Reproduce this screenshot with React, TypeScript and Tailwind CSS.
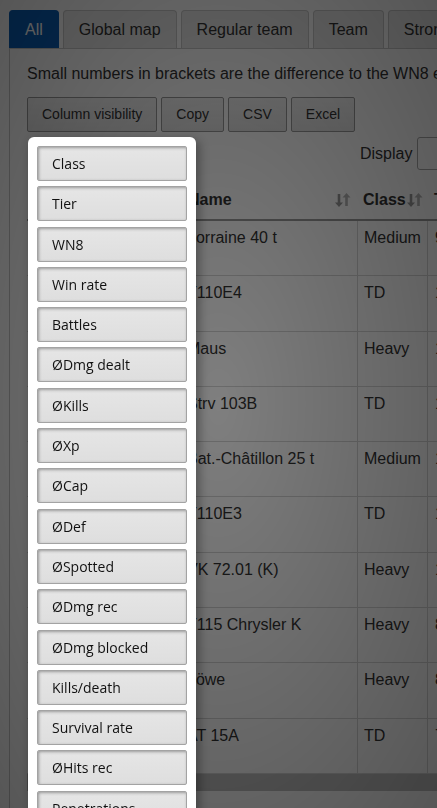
import React from 'react';

const tabs = ['All', 'Global map', 'Regular team', 'Team', 'Stronghold'];

const toolbarButtons = ['Column visibility', 'Copy', 'CSV', 'Excel'];

const rows = [
  { pos: 1, name: 'Lorraine 40 t', cls: 'Medium', tier: 9, wn8: 2210 },
  { pos: 2, name: 'T110E4', cls: 'TD', tier: 10, wn8: 2480 },
  { pos: 3, name: 'Maus', cls: 'Heavy', tier: 10, wn8: 1985 },
  { pos: 4, name: 'Strv 103B', cls: 'TD', tier: 10, wn8: 2302 },
  { pos: 5, name: 'Bat.-Châtillon 25 t', cls: 'Medium', tier: 10, wn8: 2650 },
  { pos: 6, name: 'T110E3', cls: 'TD', tier: 10, wn8: 2105 },
  { pos: 7, name: 'VK 72.01 (K)', cls: 'Heavy', tier: 10, wn8: 1890 },
  { pos: 8, name: 'T115 Chrysler K', cls: 'Heavy', tier: 8, wn8: 1720 },
  { pos: 9, name: 'Löwe', cls: 'Heavy', tier: 8, wn8: 1655 },
  { pos: 10, name: 'AT 15A', cls: 'TD', tier: 7, wn8: 1540 },
];

const visibilityItems = [
  'Class',
  'Tier',
  'WN8',
  'Win rate',
  'Battles',
  'ØDmg dealt',
  'ØKills',
  'ØXp',
  'ØCap',
  'ØDef',
  'ØSpotted',
  'ØDmg rec',
  'ØDmg blocked',
  'Kills/death',
  'Survival rate',
  'ØHits rec',
  'Penetrations',
];

const SortIcon: React.FC = () => (
  <svg width="17" height="18" viewBox="0 0 17 18" className="shrink-0">
    <path d="M5 3v10" stroke="#9a9a9a" strokeWidth="2.6" />
    <path d="M1 11.5l4 4.5 4-4.5z" fill="#9a9a9a" />
    <path d="M12.5 15V5" stroke="#b5b5b5" strokeWidth="2.6" />
    <path d="M8.5 6.5l4-4.5 4 4.5z" fill="#b5b5b5" />
  </svg>
);

const App: React.FC = () => {
  return (
    <div className="relative h-[808px] overflow-hidden bg-white font-['Liberation_Sans',Arial,sans-serif] text-[#333]">
      <div className="pl-[9px] pt-[10px] w-[900px]">
        {/* tabs */}
        <div className="flex gap-[4px]">
          {tabs.map((t, i) => (
            <div
              key={t}
              className={`h-[38px] px-[15px] flex items-center text-[16px] rounded-t-[4px] border border-b-0 whitespace-nowrap ${
                i === 0 ? 'bg-[#0b5fb8] border-[#0b5fb8] text-white' : 'bg-[#e8e8e8] border-[#c8c8c8] text-[#333]'
              }`}
            >
              {t}
            </div>
          ))}
        </div>

        {/* tab panel */}
        <div className="border border-[#c8c8c8] bg-white pl-[17px] pt-[16px] pb-[30px]">
          <p className="text-[16px] leading-[18px] whitespace-nowrap">
            Small numbers in brackets are the difference to the WN8 expected values of the tank.
          </p>

          <div className="flex gap-[4px] mt-[14px]">
            {toolbarButtons.map((b) => (
              <button
                key={b}
                type="button"
                className="h-[35px] px-[14px] text-[14px] text-[#333] border border-[#999] rounded-[2px] bg-gradient-to-b from-[#f3f3f3] to-[#e2e2e2]"
              >
                {b}
              </button>
            ))}
          </div>

          <div className="flex items-center gap-[5px] mt-[5px] pl-[333px] h-[33px]">
            <span className="text-[16px]">Display</span>
            <div className="h-[33px] w-[60px] border border-[#aaa] rounded-[3px] flex items-center pl-[21px] text-[16px]">
              10
            </div>
          </div>

          {/* table */}
          <div className="mt-[10px]">
            <div className="flex h-[41px] border-b-2 border-[#9a9a9a] font-bold text-[16px]">
              <div className="w-[60px] px-[6px] flex items-center">#</div>
              <div className="w-[94px] px-[6px] flex items-center">Tank</div>
              <div className="w-[176px] pl-[7px] pr-[6px] flex items-center justify-between">
                <span>Name</span>
                <SortIcon />
              </div>
              <div className="w-[70px] pl-[6px] pr-[5px] flex items-center justify-between">
                <span>Class</span>
                <SortIcon />
              </div>
              <div className="w-[60px] px-[7px] flex items-center">Tier</div>
              <div className="w-[80px] px-[7px] flex items-center">WN8</div>
            </div>
            {rows.map((r) => (
              <div key={r.pos} className="flex h-[55.3px] border-b border-[#d6d6d6] text-[16px] leading-[18px]">
                <div className="w-[60px] px-[6px] pt-[8px]">{r.pos}</div>
                <div className="w-[94px] px-[6px] pt-[8px]" />
                <div className="w-[176px] px-[6px] pt-[8px] whitespace-nowrap">{r.name}</div>
                <div className="w-[70px] px-[6px] pt-[8px] border-l border-[#d6d6d6]">{r.cls}</div>
                <div className="w-[60px] px-[7px] pt-[8px] border-l border-[#d6d6d6]">{r.tier}</div>
                <div className="w-[80px] px-[7px] pt-[8px] border-l border-[#d6d6d6]">{r.wn8}</div>
              </div>
            ))}
            <div className="h-[17px] bg-[#c1c1c1]" />
          </div>
        </div>
      </div>

      {/* modal background */}
      <div className="fixed inset-0 z-10 bg-black/50" />
      <div className="fixed inset-0 z-10 bg-[radial-gradient(ellipse_farthest-corner_at_center,rgba(0,0,0,0)_0%,rgba(0,0,0,0.32)_100%)]" />

      {/* column visibility collection */}
      <div className="absolute z-20 left-[28px] top-[137px] w-[168px] bg-white rounded-[6px] p-[9px] flex flex-col gap-[5.3px] shadow-[3px_4px_10px_1px_rgba(0,0,0,0.3)] font-['Open_Sans','Noto_Sans',sans-serif]">
        {visibilityItems.map((c) => (
          <button
            key={c}
            type="button"
            className="h-[35px] w-[150px] shrink-0 text-left pl-[14px] text-[14px] text-[#111] border border-[#a3a3a3] rounded-[2px] bg-gradient-to-b from-[#e6e6e6] to-[#dedede] shadow-[inset_1px_1px_3px_#999]"
          >
            {c}
          </button>
        ))}
      </div>
    </div>
  );
};

export default App;
